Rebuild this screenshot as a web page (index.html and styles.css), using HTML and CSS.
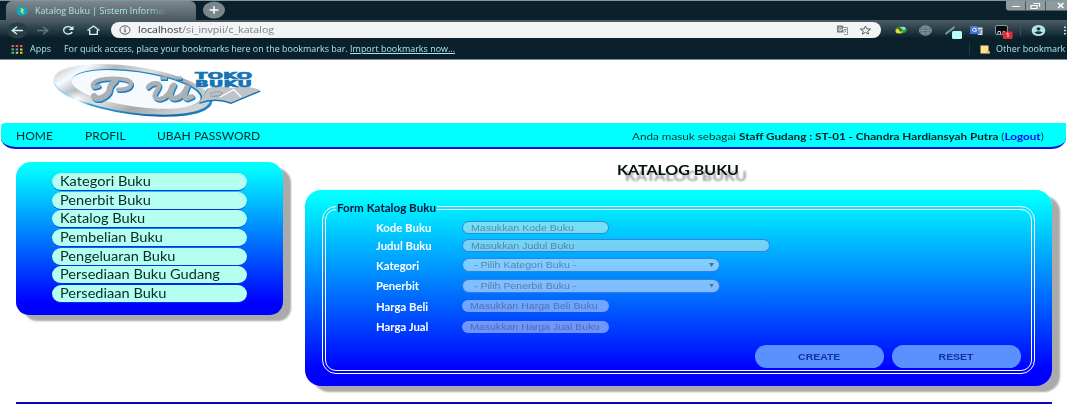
FILE: index.html
```html
<!DOCTYPE html>
<html lang="id">
<head>
<meta charset="utf-8">
<title>Katalog Buku | Sistem Informasi</title>
<link rel="stylesheet" href="styles.css">
</head>
<body>
<header class="browser">
  <div class="tabstrip">
    <div class="tab">
      <svg class="favicon" width="12" height="10" viewBox="0 0 12 10"><ellipse cx="6" cy="5" rx="5.4" ry="4.6" fill="#08a9c9"/><path d="M5 2.2 7.8 4 6.2 5.2 7.6 7.4 4.6 5.6 6 4.6z" fill="#e6ee42" stroke="#e6ee42" stroke-width=".7"/></svg>
      <div class="tabtitle"><span class="ui">Katalog Buku | Sistem Informasi</span></div>
      <svg class="tabclose" width="8" height="6" viewBox="0 0 8 6"><path d="M1 .5l6 5M7 .5l-6 5" stroke="#5c737b" stroke-width="1"/></svg>
    </div>
    <svg class="newtab" width="22" height="18" viewBox="0 0 22 18"><ellipse cx="11" cy="9" rx="11" ry="8.6" fill="#7b868c"/><path d="M6.5 9h9M11 5.2v7.6" stroke="#fff" stroke-width="1.5"/></svg>
    <svg class="winbtns" width="61" height="11" viewBox="0 0 61 11"><path d="M0 0h61v9.500H3Q0 9.500 0 7z" fill="#8f9a9e"/><path d="M19.500 0v9.500M39.500 0v9.500" stroke="#4a585e"/><path d="M5.500 4.500h9v2h-9z" fill="#fff" stroke="#515e64" stroke-width=".5"/><path d="M27.500 2.500h6v3.500M25 4.500h6v3h-6z" fill="none" stroke="#fff" stroke-width="1.200"/><path d="M52 2l5.500 5M57.500 2l-5.500 5" stroke="#fff" stroke-width="1.500"/></svg>
  </div>
  <div class="toolbar">
    <svg class="navicons" width="111" height="20" viewBox="0 0 111 20" fill="none" stroke-width="1.4">
      <ellipse cx="17.500" cy="10.500" rx="10" ry="8" fill="#2b3c44"/>
      <path d="M23 10.500H12.500M17 6.700l-4.800 3.800 4.800 3.800" stroke="#c8f5f4"/>
      <path d="M37 10.500h10M43 6.700l4.800 3.800-4.800 3.800" stroke="#5f7980"/>
      <path d="M72 8.200A4.600 3.700 0 1 0 72.300 12" stroke="#c8f5f4"/><path d="M73.500 6v4h-5z" fill="#c8f5f4"/>
      <path d="M87.500 10.500 93.500 6l6 4.500M89.700 10v4.400h7.600V10" stroke="#c8f5f4"/>
    </svg>
    <div class="omnibox">
      <svg width="12" height="10" viewBox="0 0 12 10"><ellipse cx="6" cy="5" rx="5" ry="4.200" fill="none" stroke="#555c62"/><path d="M6 4.300v3M6 2.300v1.100" stroke="#444b50" stroke-width="1.200"/></svg>
      <span class="url">localhost<span class="path">/si_invpii/c_katalog</span></span>
      <svg class="omniicons" width="40" height="14" viewBox="0 0 40 14"><path d="M1 2.500h6l1.500 7H1z" fill="#777d82"/><path d="M7 4.500h4.500v7H8" fill="#fff" stroke="#777d82" stroke-width=".8"/><path d="M8 6.500h3M9.500 6q0 3-1.500 4M8.500 7.500l2 2" stroke="#777d82" stroke-width=".7" fill="none"/><path d="M5.800 5.300Q3 3.500 2.700 6t2.500 1.500L6 6.300H4.500" stroke="#fff" stroke-width=".8" fill="none"/><path d="M29.500 3l1.300 2.900 3.900.2-3 2 1 3-3.200-1.700-3.200 1.700 1-3-3-2 3.900-.2z" fill="none" stroke="#50575c" stroke-width=".9"/></svg>
    </div>
    <svg class="extensions" width="186" height="20" viewBox="0 0 186 20">
      <ellipse cx="20" cy="10" rx="5.800" ry="3.600" fill="#2f9636"/><ellipse cx="18" cy="11" rx="3.400" ry="2.500" fill="#ecd935"/><ellipse cx="22" cy="8.500" rx="2.800" ry="1.800" fill="#8ee2d0"/><path d="M16 7l6 2.500-2.500 2.500z" fill="#197329"/>
      <g fill="#526871" stroke="#87959a"><ellipse cx="44.500" cy="10.500" rx="6" ry="4.600"/><ellipse cx="44.500" cy="10.500" rx="2.700" ry="4.600"/><path d="M38.500 10.500h12M40 8h9M40 13h9"/></g>
      <path d="M64.500 14 73.500 7" stroke="#7e9a98" stroke-width="2"/><rect x="71" y="11" width="10" height="8" rx="1.500" fill="#b7fff5"/>
      <path d="M95 7.500h6.500V15H97z" fill="#d4dce0"/><path d="M89 6h7l3 8H89z" fill="#3c74d8"/><path d="M95.500 8.500Q92 7 91.500 9.500t4 1.500V10H94" stroke="#fff" fill="none" stroke-width=".9"/><path d="M97 10h4M99.500 9q0 3-2 4M98 11l2.500 2.500" stroke="#6b7d86" stroke-width=".8" fill="none"/>
      <rect x="114.500" y="5.500" width="12" height="9" rx="1.500" fill="#090b0d" stroke="#89969b"/><path d="M117 14v-2.500h2.500V14M122 14v-2.500h2" stroke="#c8d1d4" fill="none"/><rect x="122" y="11.500" width="9.500" height="7.500" rx="1" fill="#e12d36"/><path d="M125.500 13.500l1.500-.5v4" stroke="#ffd2d2" fill="none"/>
      <path d="M139.500 5v11" stroke="#36525e"/>
      <ellipse cx="157.500" cy="10.500" rx="6.800" ry="5.500" fill="#b4e6e8"/><ellipse cx="157.500" cy="8.800" rx="2" ry="1.600" fill="#17343f"/><path d="M153.300 12.600q4.200-2.600 8.400 0-4.200 3.400-8.400 0z" fill="#17343f"/>
      <path d="M183 6.500h2v1.600h-2zM183 9.700h2v1.600h-2zM183 12.900h2v1.600h-2z" fill="#b4e6e8"/>
    </svg>
  </div>
  <div class="bookmarks">
    <svg class="appsicon" width="12" height="9" viewBox="0 0 12 9"><path d="M.5 0h2.500v2H.5zM4.700 0h2.500v2H4.700zM9 0h2.500v2H9z" fill="#ee554b"/><path d="M.5 3.400h2.500v2H.5z" fill="#57c05f"/><path d="M4.700 3.400h2.500v2H4.700z" fill="#5499e8"/><path d="M9 3.400h2.500v2H9zM4.700 6.800h2.500v2H4.700zM9 6.800h2.500v2H9z" fill="#f0c83d"/><path d="M.5 6.800h2.500v2H.5z" fill="#57c05f"/></svg>
    <span class="ui apps">Apps</span>
    <span class="ui quick">For quick access, place your bookmarks here on the bookmarks bar. <u>Import bookmarks now...</u></span>
    <div class="other">
      <svg width="10" height="9" viewBox="0 0 10 9"><path d="M.5.500h8V6h1v2.500h-9z" fill="#ffe28a"/><path d="M6.500 6h3v2.500h-2z" fill="#e9bd50"/></svg>
      <span class="ui">Other bookmark</span>
    </div>
  </div>
</header>

<svg class="logo" width="214" height="60" viewBox="0 0 214 60">
  <defs>
    <linearGradient id="ring" x1="0" y1="0" x2="1" y2=".35"><stop offset="0" stop-color="#8f9297"/><stop offset=".13" stop-color="#d5d7d9"/><stop offset=".22" stop-color="#f4fbff"/><stop offset=".35" stop-color="#b5b8bb"/><stop offset=".55" stop-color="#dcdedf"/><stop offset=".75" stop-color="#a6a9ad"/><stop offset="1" stop-color="#cfd3d5"/></linearGradient>
    <linearGradient id="rim" x1="0" x2="1"><stop offset="0" stop-color="#b9e5fa"/><stop offset=".25" stop-color="#2f9fdb"/><stop offset=".7" stop-color="#0866a8"/><stop offset="1" stop-color="#2686c7"/></linearGradient>
    <radialGradient id="shine"><stop offset="0" stop-color="#fff"/><stop offset="1" stop-color="#fff" stop-opacity="0"/></radialGradient>
    <g id="initials" fill="none" stroke-linecap="round">
      <path d="M46 26Q38 29 40 24Q43 18.500 60 18.500Q79 18.500 78 24.500Q76 30 65 29.500" stroke-width="4"/>
      <path d="M62 21Q57 25 56.500 30T47 38.500Q41 39 41 36" stroke-width="6"/>
      <path d="M95 27Q99 22.500 105 23.500Q108 25 103 32Q99 39 107 39Q115 38 119 26" stroke-width="4.500"/>
      <path d="M121 25Q114 38 121 38.500Q130 38 135 25Q129 38 134 38.500L139 36.500" stroke-width="5"/>
      <path d="M107 18h7M122 18h7" stroke-width="3" stroke-linecap="butt"/>
    </g>
  </defs>
  <g transform="rotate(8 80 30)">
    <ellipse cx="80" cy="31.500" rx="80" ry="23" fill="url(#rim)"/>
    <ellipse cx="79" cy="29.500" rx="79" ry="23" fill="url(#ring)"/>
    <ellipse cx="84" cy="28" rx="65.500" ry="17.500" fill="#1783c5"/>
    <ellipse cx="83" cy="29" rx="65" ry="17.300" fill="#f6fafd"/>
  </g>
  <ellipse cx="24" cy="39" rx="16" ry="9" fill="url(#shine)"/>
  <use href="#initials" stroke="#1682c4" x="1" y="1.500"/>
  <use href="#initials" stroke="#abb0b5"/>
  <path d="M141 11h60v17h-56z" fill="#fff"/>
  <path d="M146 44 154 29Q166 24 180 29Q190 24 208 31.500L178 44Q163 38 146 44z" fill="#0f74b8"/>
  <path d="M146 42.500 155 28.500Q166 24 180 28.500Q190 24 208 30L178 42.500Q163 36.500 146 42.500z" fill="#c0c4c7"/>
  <path d="M167 37 181 29.500 188 37" fill="none" stroke="#fff" stroke-width="1.300"/>
  <path d="M157 34q7-4 13-1-5 5-13 3M160 36q5 0 8-1" fill="none" stroke="#8ea1ae" stroke-width="1"/>
  <g class="logotext"><text x="142" y="18.500" textLength="57" lengthAdjust="spacingAndGlyphs">TOKO</text><text x="142" y="26.800" textLength="57" lengthAdjust="spacingAndGlyphs">BUKU</text></g>
</svg>

<nav class="menubar">
  <a class="home">HOME</a><a class="profil">PROFIL</a><a class="ubah">UBAH PASSWORD</a>
  <div class="session">Anda masuk sebagai <b>Staff Gudang : ST-01 - Chandra Hardiansyah Putra</b> (<b class="logout">Logout</b>)</div>
</nav>

<div class="content">
  <aside class="sidebar">
    <a><span>Kategori Buku</span></a>
    <a><span>Penerbit Buku</span></a>
    <a><span>Katalog Buku</span></a>
    <a><span>Pembelian Buku</span></a>
    <a><span>Pengeluaran Buku</span></a>
    <a><span>Persediaan Buku Gudang</span></a>
    <a><span>Persediaan Buku</span></a>
  </aside>
  <main class="main">
    <h1><span>KATALOG BUKU</span></h1>
    <section class="panel">
      <fieldset>
        <legend><span>Form Katalog Buku</span></legend>
        <div class="rows">
          <label>Kode Buku</label><div class="field short"><span>Masukkan Kode Buku</span></div>
          <label>Judul Buku</label><div class="field long"><span>Masukkan Judul Buku</span></div>
          <label>Kategori</label><div class="field select"><span>- Pilih Kategori Buku -</span><i></i></div>
          <label>Penerbit</label><div class="field select"><span>- Pilih Penerbit Buku -</span><i></i></div>
          <label>Harga Beli</label><div class="field short plain"><span>Masukkan Harga Beli Buku</span></div>
          <label>Harga Jual</label><div class="field short plain"><span>Masukkan Harga Jual Buku</span></div>
        </div>
        <div class="actions"><div class="btn"><span>CREATE</span></div><div class="btn"><span>RESET</span></div></div>
      </fieldset>
    </section>
  </main>
</div>
<div class="rule"></div>
</body>
</html>
```
FILE: styles.css
```css
* { box-sizing: border-box; }
body { margin: 0; width: 1067px; height: 409px; overflow: hidden; background: #fff; font-family: Lato, sans-serif; color: #0a2a2a; }
svg { display: block; flex: none; }

.browser { height: 60px; background: #0a212c; border-top: 1px solid #7d98a2; border-bottom: 1px solid #7b8b92; overflow: hidden; font-family: "Open Sans", sans-serif; }
.ui { display: inline-block; font-size: 8.5px; line-height: 12px; white-space: nowrap; transform: scaleX(1.054); transform-origin: left center; color: #a9e4e8; }
.tabstrip { display: flex; height: 19px; padding-left: 6px; }
.tab { display: flex; align-items: center; width: 190px; padding-left: 10px; border-radius: 6px 6px 0 0; background: linear-gradient(#7c888b, #4c5b62); }
.tabtitle { width: 137px; height: 12px; margin: 0 0 0 7px; display: flex; -webkit-mask-image: linear-gradient(90deg, #000 112px, transparent 133px); mask-image: linear-gradient(90deg, #000 112px, transparent 133px); }
.tabclose { margin-left: 8px; }
.newtab { margin-left: 7px; }
.winbtns { margin-left: auto; }
.toolbar { display: flex; height: 20px; background: linear-gradient(#4c5d66, #0a212c 90%); }
.omnibox { display: flex; align-items: center; width: 770px; height: 16px; margin-top: 2px; padding-left: 8px; border-radius: 8px; background: #f1f3f5; }
.url { margin-left: 7px; font-size: 9px; line-height: 14px; transform: scaleX(1.173); transform-origin: left center; color: #30383d; }
.path { color: #7a7f84; }
.omniicons { margin-left: auto; margin-right: 5px; }
.bookmarks { display: flex; align-items: center; height: 18px; padding-left: 11px; }
.apps { margin-left: 7px; width: 34px; }
.other { display: flex; align-items: center; width: 98px; height: 12px; margin-left: auto; padding-left: 10px; border-left: 1px solid #1f3c49; }
.other .ui { margin-left: 6px; }

.logo { width: 214px; height: 60px; margin: 0 0 3px 53px; }
.logotext { font: bold 8.500px "DejaVu Sans", sans-serif; fill: #1575b5; stroke: #1575b5; stroke-width: .6; }

.menubar { display: flex; align-items: center; width: 1065px; height: 26px; margin-left: 1px; padding: 1px 0 0 15px; background: #0ff; border-bottom: 2px solid #0010d8; border-radius: 4px 0 15px 15px / 4px 0 11px 11px; font-size: 11.500px; white-space: nowrap; }
.menubar a { transform: scaleX(1.045); transform-origin: left center; }
.home { width: 69px; }
.profil { width: 72px; }
.ubah { width: 100px; }
.session { width: 360px; margin-left: 375px; font-size: 10px; transform: scaleX(1.17); transform-origin: left center; }
.session b { color: #041b20; }
.session .logout { color: #00f; }

.content { display: flex; height: 253px; padding: 13px 15px 0 16px; }
.sidebar { width: 267px; height: 153px; padding: 11px 36px 0; border-radius: 15px 15px 13px 13px; background: linear-gradient(#0ff 3%, #00f 92%); box-shadow: 8px 6px 2px #aaa; }
.sidebar a { display: flex; align-items: center; width: 195px; height: 18px; margin-bottom: .7px; padding: 1px 0 0 8px; border-radius: 9px; background: #b5fff1; border-bottom: 1px solid #0632dc; font-size: 12.500px; line-height: 16px; }
.sidebar span { white-space: nowrap; transform: scaleX(1.167); transform-origin: left center; }

.main { width: 747px; margin-left: 22px; }
h1 { height: 28px; margin: 0; padding-left: 312px; font-size: 13px; line-height: 17px; color: #021010; }
h1 span { display: inline-block; white-space: nowrap; transform: scaleX(1.229); transform-origin: left center; text-shadow: 6.500px 6px 2px #999; }
.panel { height: 196px; padding: 12px 17px 0; border-radius: 16px; background: linear-gradient(#0ff 3%, #00f 92%); box-shadow: 8px 6px 2px #aaa; }
fieldset { height: 172px; margin: 0; padding: 0; border: 4px double #fff; border-radius: 14px; min-width: 0; }
legend { width: 101px; height: 11px; margin-left: 10px; padding: 1px 0 0 1px; font-size: 10.500px; font-weight: bold; line-height: 11px; color: #021638; }
legend span { display: inline-block; white-space: nowrap; transform: scaleX(1.107); transform-origin: left center; }
.rows { display: grid; grid-template-columns: 86px 308px; grid-template-rows: 17px 19px 20px 21px 20px 21px; align-items: center; height: 122px; margin: 6px 0 0 50px; }
label { padding-top: 1px; font-size: 10.500px; font-weight: bold; line-height: 12px; color: #fff; transform: scaleX(1.08); transform-origin: left center; white-space: nowrap; }
.field { display: flex; align-items: center; height: 13px; padding-left: 8px; border: 1px solid rgba(20, 100, 205, .7); border-radius: 7px; background: rgba(235, 235, 235, .5); font: 9px "Liberation Sans", Arial, sans-serif; color: rgba(50, 75, 115, .55); }
.field span { white-space: nowrap; transform: scaleX(1.175); transform-origin: left center; }
.short { width: 147px; }
.plain { height: 12px; border: 0; background: rgba(225, 235, 255, .5); }
.select { width: 258px; height: 14px; padding-left: 11px; background: rgba(255, 255, 255, .5); }
.select i { width: 5px; height: 4px; margin: 0 5px 0 auto; background: #3c74a8; clip-path: polygon(0 0, 100% 0, 50% 100%); }
.actions { display: flex; gap: 8px; height: 23px; margin: 4px 0 0 429px; }
.btn { display: flex; align-items: center; justify-content: center; width: 129px; height: 23px; border-radius: 12px; background: #5a91ff; color: #12329c; font: bold 9px "Liberation Sans", Arial, sans-serif; }
.btn span { transform: scaleX(1.16); }
.rule { width: 1036px; height: 2px; margin-left: 16px; background: #0808c4; }
```
